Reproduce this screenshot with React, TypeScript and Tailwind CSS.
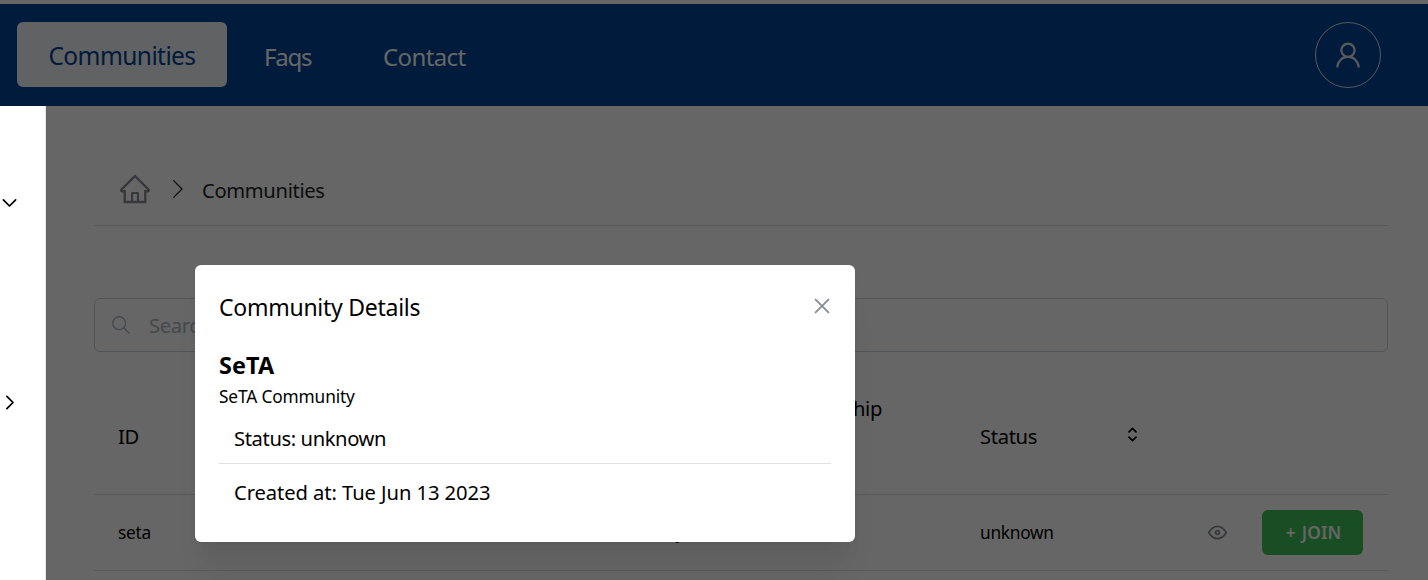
import type { ReactNode } from "react";
import { AiOutlineHome, AiOutlineUser } from "react-icons/ai";

type StrokeIconProps = { size: number; width?: number; className?: string; children: ReactNode };

function StrokeIcon({ size, width = 2, className, children }: StrokeIconProps) {
  return (
    <svg
      width={size}
      height={size}
      viewBox="0 0 24 24"
      fill="none"
      stroke="currentColor"
      strokeWidth={width}
      strokeLinecap="round"
      strokeLinejoin="round"
      className={className}
    >
      {children}
    </svg>
  );
}

function NavBar() {
  return (
    <header className="flex h-[102px] items-start justify-between bg-[#004494] pt-[18px] pr-[47px] pl-[17px] text-[24.5px] text-white">
      <nav className="flex items-start">
        <a className="flex h-[65px] w-[210px] items-center justify-center rounded-md bg-[#f0f4f8] pt-[3px] tracking-[-0.58px] text-[#004494]">
          Communities
        </a>
        <a className="ml-[37px] flex h-[65px] w-[119px] items-center pt-[5px] text-[24px] tracking-[-1.2px]">Faqs</a>
        <a className="flex h-[65px] items-center pt-[5px] text-[24px] tracking-[-0.62px]">Contact</a>
      </nav>
      <button className="flex size-[66px] items-center justify-center rounded-full border border-[#dee2e6] text-[#d8dce0]">
        <AiOutlineUser size={32} className="-ml-px" />
      </button>
    </header>
  );
}

function Sidebar() {
  return (
    <aside className="relative z-20 flex w-[46px] shrink-0 flex-col border-r border-[#e5e7eb] bg-white pt-[86px] text-black">
      <StrokeIcon size={21} className="-ml-[1.5px]">
        <path d="M5 9l7 7l7 -7" />
      </StrokeIcon>
      <StrokeIcon size={21} className="mt-[179px] -ml-[1.5px]">
        <path d="M9 5l7 7l-7 7" />
      </StrokeIcon>
    </aside>
  );
}

function Breadcrumb() {
  return (
    <div className="flex h-[72px] items-center border-b border-[#dee2e6] pl-[24px]">
      <AiOutlineHome size={34} className="-mt-[2px] text-[#868e96]" />
      <StrokeIcon size={26} width={1.2} className="-mt-px ml-[13px] text-[#212529]">
        <path d="M8 4.3l7.7 7.7l-7.7 7.7" />
      </StrokeIcon>
      <span className="mt-px ml-[11px] text-[20.2px] tracking-[-0.34px] text-[#212529]">Communities</span>
    </div>
  );
}

const columns = "grid grid-cols-[426px_228px_208px_204px_228px] border-b border-[#dee2e6]";

function CommunityTable() {
  return (
    <section>
      <div className={`${columns} h-[143px] text-[20.2px] tracking-[-0.34px]`}>
        <div className="pt-[69px] pl-6">ID</div>
        <div />
        <div className="flex justify-end pt-[41px] pr-[74px]">Membership</div>
        <div className="flex items-start justify-between pt-[69px] pr-[17px] pl-6">
          Status
          <StrokeIcon size={21} className="mt-[3px]">
            <path d="M8 9l4 -4l4 4" />
            <path d="M16 15l-4 4l-4 -4" />
          </StrokeIcon>
        </div>
        <div />
      </div>
      <div className={`${columns} h-[76px] items-center text-[17.3px] tracking-[-0.28px]`}>
        <div className="pl-6">seta</div>
        <div className="pl-6 tracking-[0.2px]">SeTA Community</div>
        <div />
        <div className="pl-6">unknown</div>
        <div className="flex items-center justify-end gap-[34.5px] pr-[25px]">
          <StrokeIcon size={21} width={1.9} className="-mt-px text-[#868e96]">
            <circle cx="12" cy="12" r="2.2" />
            <path d="M22 12c-2.667 4.667 -6 7 -10 7s-7.333 -2.333 -10 -7c2.667 -4.667 6 -7 10 -7s7.333 2.333 10 7" />
          </StrokeIcon>
          <button className="flex h-[45px] w-[101px] items-center justify-center rounded-md bg-[#40c057] pt-px pl-0.5 font-semibold tracking-[0.1px] text-white [word-spacing:1.5px]">
            + JOIN
          </button>
        </div>
      </div>
    </section>
  );
}

function DetailsDialog() {
  return (
    <div className="absolute inset-0 z-10 bg-black/60 pt-[265px] pl-[195px]">
      <div
        role="dialog"
        className="h-[277px] w-[660px] rounded-md bg-white px-6 pt-[25px] text-black shadow-[0_1px_3px_rgba(0,0,0,0.05),0_36px_28px_-7px_rgba(0,0,0,0.05),0_17px_17px_-7px_rgba(0,0,0,0.04)]"
      >
        <div className="flex h-[34px] items-center justify-between">
          <h2 className="text-[23px] tracking-[-0.26px]">Community Details</h2>
          <StrokeIcon size={28} width={1.6} className="-mt-[3px] -mr-[5px] text-[#868e96]">
            <path d="M6.5 6.5l11 11M17.5 6.5l-11 11" />
          </StrokeIcon>
        </div>
        <h3 className="mt-[25px] text-[23.4px] leading-[32px] font-bold tracking-[0.1px]">SeTA</h3>
        <p className="mt-[2px] text-[17.3px] leading-[28px] tracking-[-0.14px]">SeTA Community</p>
        <p className="flex h-[53px] items-center border-b border-[#dee2e6] pt-[2px] pl-[15px] text-[20.2px] tracking-[-0.4px]">
          Status: unknown
        </p>
        <p className="flex h-[56px] items-center pl-[15px] text-[20.2px] tracking-[-0.08px]">
          Created at: Tue Jun 13 2023
        </p>
      </div>
    </div>
  );
}

export default function App() {
  return (
    <div className="relative flex h-[580px] w-full flex-col overflow-hidden bg-white pt-1 font-['Noto_Sans',sans-serif] text-black">
      <NavBar />
      <div className="flex min-h-0 flex-1">
        <Sidebar />
        <main className="min-w-0 flex-1 pt-[48px] pr-[40px] pl-[48px]">
          <Breadcrumb />
          <div className="mt-[72px] flex h-[54px] items-center rounded-md border border-[#ced4da] pl-[15px] text-[#adb5bd]">
            <StrokeIcon size={22} width={1.5}>
              <circle cx="10" cy="10" r="7" />
              <path d="M21 21l-6 -6" />
            </StrokeIcon>
            <span className="mt-px ml-[17px] text-[20.2px] tracking-[-0.34px]">Search</span>
          </div>
          <CommunityTable />
        </main>
      </div>
      <DetailsDialog />
    </div>
  );
}
